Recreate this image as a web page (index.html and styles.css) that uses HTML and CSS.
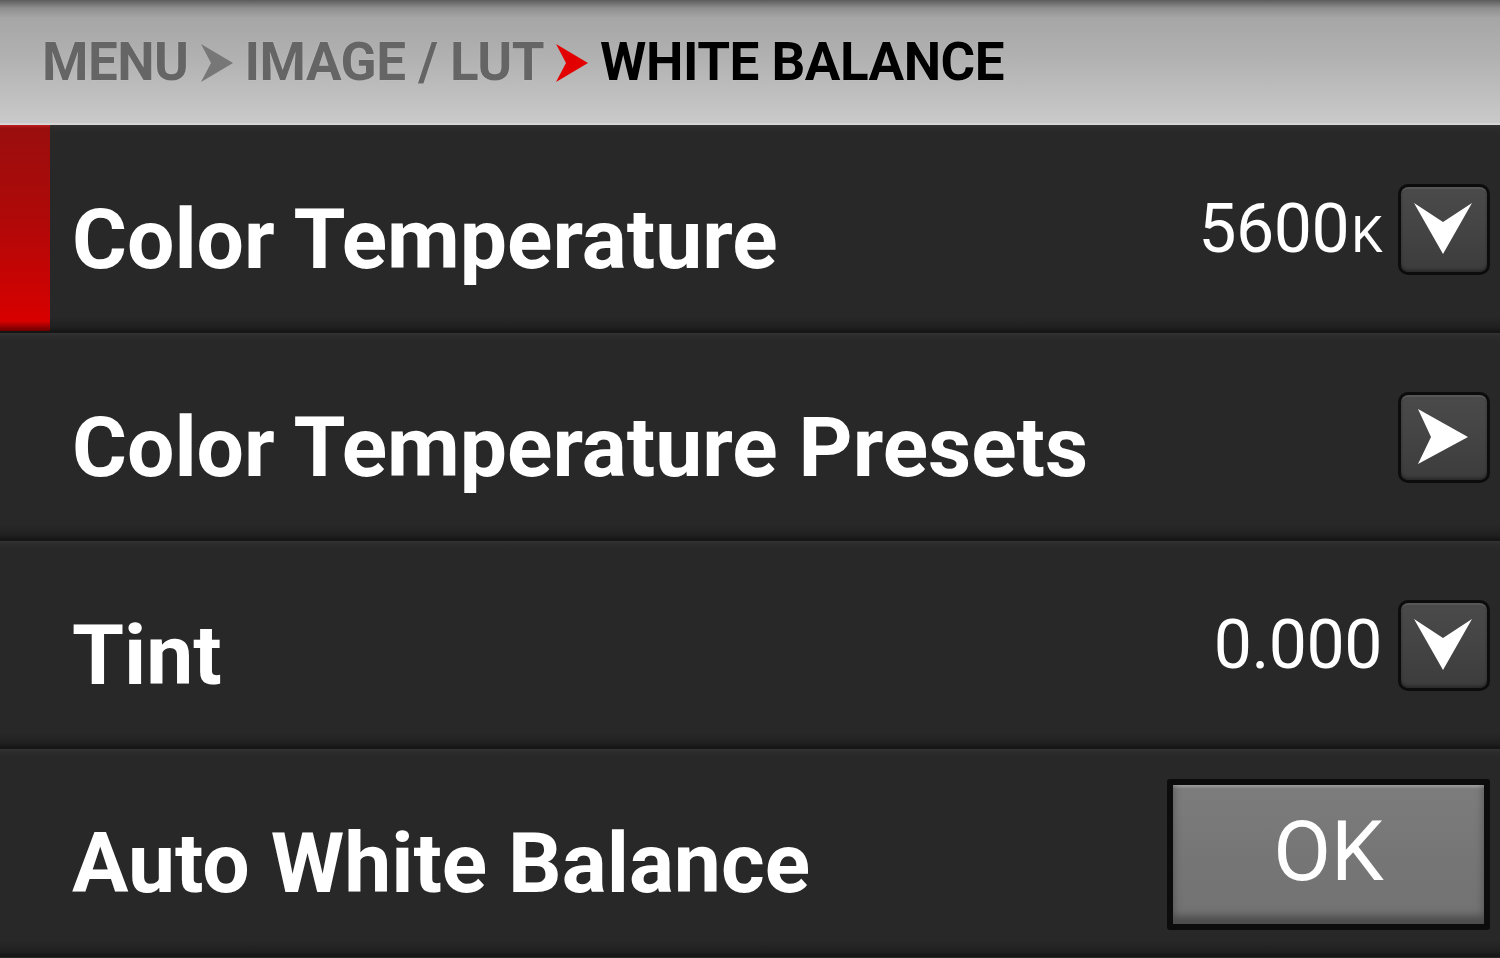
FILE: index.html
```html
<!DOCTYPE html>
<html lang="en">
<head>
<meta charset="utf-8">
<title>White Balance</title>
<link rel="stylesheet" href="styles.css">
</head>
<body>
<div class="screen">
  <header class="crumbs">
    <span class="crumb">MENU</span>
    <svg class="sep" viewBox="0 0 32 38" width="32" height="38"><polygon points="0,0 32,19 0,38 10,19" fill="#777777"/></svg>
    <span class="crumb">IMAGE / LUT</span>
    <svg class="sep red" viewBox="0 0 32 38" width="32" height="38"><polygon points="0,0 32,19 0,38 10,19" fill="#e30000"/></svg>
    <span class="crumb current">WHITE BALANCE</span>
  </header>
  <main class="list">
    <div class="row selected">
      <span class="label">Color Temperature</span>
      <div class="ctrl">
        <span class="value">5600<span class="unit">K</span></span>
        <button class="btn-icon" type="button" aria-label="Open">
          <svg viewBox="0 0 60 52" width="60" height="52"><polygon points="0,0 29,19 58,0 29,51" fill="#ffffff"/></svg>
        </button>
      </div>
    </div>
    <div class="row">
      <span class="label">Color Temperature Presets</span>
      <div class="ctrl">
        <button class="btn-icon" type="button" aria-label="Enter">
          <svg viewBox="0 0 52 56" width="52" height="56"><polygon points="0,0 50,28 0,55 13,28" fill="#ffffff"/></svg>
        </button>
      </div>
    </div>
    <div class="row">
      <span class="label">Tint</span>
      <div class="ctrl">
        <span class="value">0.000</span>
        <button class="btn-icon" type="button" aria-label="Open">
          <svg viewBox="0 0 60 52" width="60" height="52"><polygon points="0,0 29,19 58,0 29,51" fill="#ffffff"/></svg>
        </button>
      </div>
    </div>
    <div class="row">
      <span class="label">Auto White Balance</span>
      <div class="ctrl">
        <button class="btn-ok" type="button">OK</button>
      </div>
    </div>
  </main>
</div>
</body>
</html>
```
FILE: styles.css
```css
* { box-sizing: border-box; }
html, body {
  margin: 0;
  padding: 0;
  background: #282828;
}
body {
  width: 1500px;
  height: 958px;
  overflow: hidden;
  font-family: Roboto, "Liberation Sans", sans-serif;
}
.screen {
  display: flex;
  flex-direction: column;
  height: 958px;
}
.crumbs {
  height: 125px;
  flex: 0 0 125px;
  display: flex;
  align-items: center;
  gap: 12px;
  padding: 2px 0 0 42px;
  background: linear-gradient(to bottom, #5c5c5c 0px, #8e8e8e 8px, #a6a6a6 18px, #b2b2b2 60px, #c9c9c9 121px);
  border-bottom: 2px solid #d6d6d6;
}
.crumb {
  font-weight: 700;
  font-size: 53px;
  letter-spacing: -0.5px;
  color: #656565;
  line-height: 1;
  text-shadow: 0 0 1px rgba(255,255,255,0.5);
}
.crumb.current {
  color: #000000;
}
.sep { display: block; flex: 0 0 auto; }
.list {
  flex: 1;
  display: flex;
  flex-direction: column;
}
.row {
  position: relative;
  height: 208px;
  flex: 0 0 208px;
  display: flex;
  align-items: center;
  justify-content: space-between;
  padding: 0 10px 0 72px;
  background: linear-gradient(to bottom, #333333 0px, #2a2a2a 4px, #282828 10px, #282828 192px, #1f1f1f 203px, #161616 206px);
}
.row.selected::before {
  content: "";
  position: absolute;
  left: 0;
  top: 0;
  width: 50px;
  height: 206px;
  background: linear-gradient(to bottom, #c02020 0px, #9a0e0e 3px, #b20808 100px, #d80000 196px, #6a0000 206px);
}
.label {
  color: #ffffff;
  font-weight: 700;
  font-size: 84px;
  line-height: 1;
  padding-top: 22px;
}
.ctrl {
  display: flex;
  align-items: center;
  gap: 16px;
}
.value {
  color: #ffffff;
  font-size: 68px;
  line-height: 1;
  letter-spacing: -0.5px;
}
.unit {
  font-size: 50px;
  margin-left: 2px;
}
.btn-icon {
  width: 92px;
  height: 91px;
  padding: 0;
  border: 3px solid #0c0c0c;
  border-radius: 10px;
  background: linear-gradient(to bottom, #4a4a4a 0%, #444444 50%, #3c3c3c 100%);
  box-shadow: inset 0 2px 0 rgba(255,255,255,0.08), inset 0 -2px 3px rgba(0,0,0,0.35);
  display: flex;
  align-items: center;
  justify-content: center;
}
.btn-ok {
  width: 323px;
  height: 151px;
  margin-top: 2px;
  padding: 0 0 4px 0;
  border: 6px solid #0c0c0c;
  border-radius: 3px;
  background: linear-gradient(to bottom, #a0a0a0 0px, #7c7c7c 4px, #767676 50%, #727272 100%);
  box-shadow: inset 0 -8px 8px rgba(0,0,0,0.35);
  color: #ffffff;
  font-family: Roboto, "Liberation Sans", sans-serif;
  font-size: 84px;
  line-height: 1;
}
```
